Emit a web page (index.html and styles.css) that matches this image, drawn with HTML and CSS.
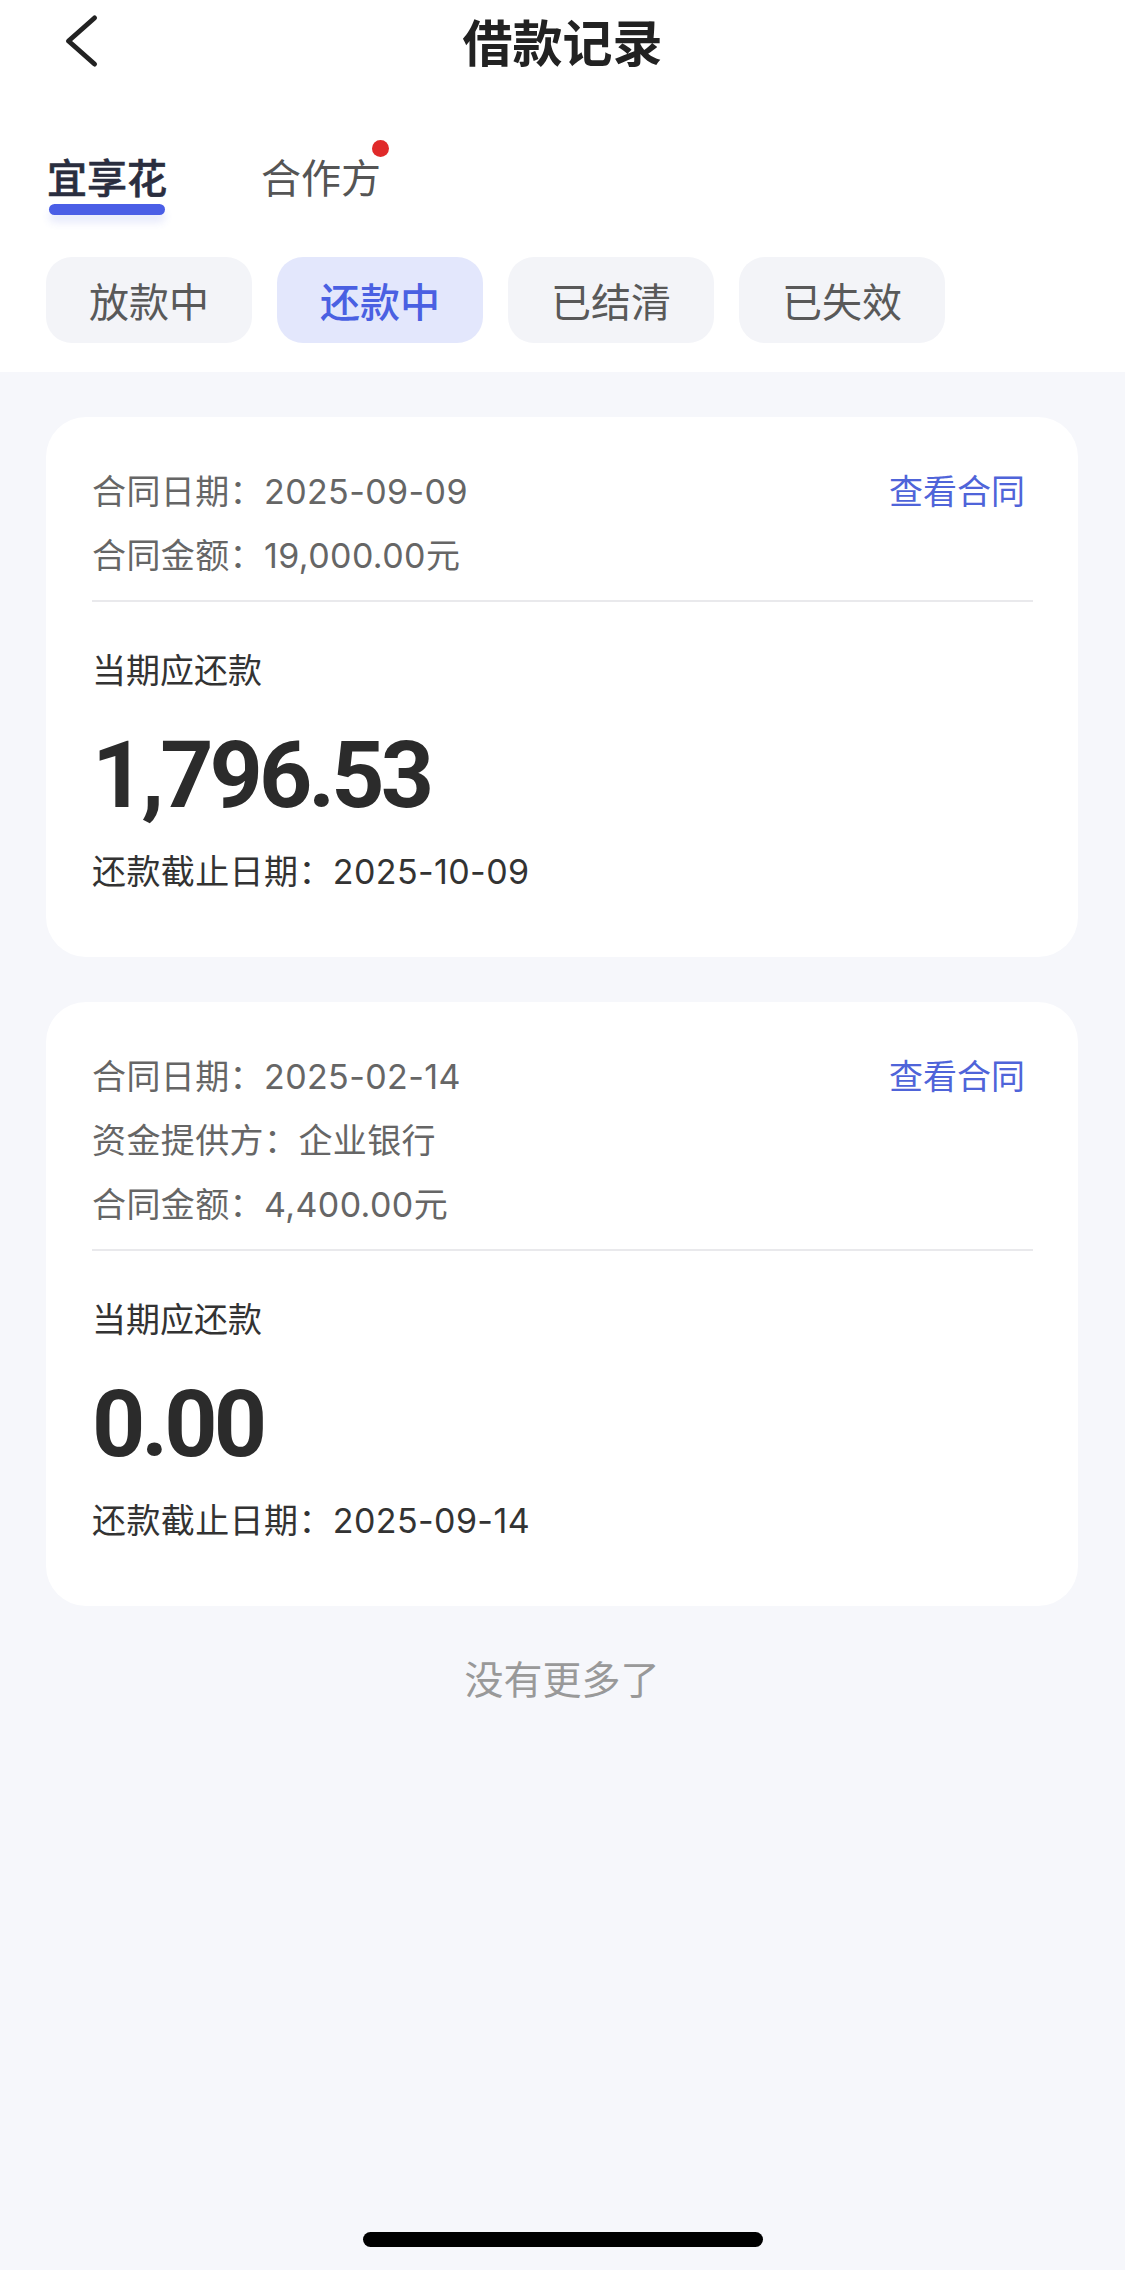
FILE: index.html
```html
<!DOCTYPE html>
<html lang="zh-CN">
<head>
<meta charset="utf-8">
<title>借款记录</title>
<link rel="stylesheet" href="styles.css">
</head>
<body>
<div class="page">
  <header class="header">
    <div class="nav">
      <div class="nav-left">
        <svg class="back" width="36" height="56" viewBox="0 0 36 56" aria-hidden="true">
          <path d="M30.5 4 L4.5 27 L30.5 50" fill="none" stroke="#222" stroke-width="5" stroke-linecap="round" stroke-linejoin="round"/>
        </svg>
      </div>
      <h1 class="title">借款记录</h1>
      <div class="nav-right"></div>
    </div>
    <div class="tabs">
      <div class="tab tab-active">
        <span class="tab-text">宜享花</span>
        <span class="tab-bar"></span>
      </div>
      <div class="tab">
        <span class="tab-text">合作方</span>
        <span class="dot"></span>
      </div>
    </div>
    <div class="chips">
      <div class="chip">放款中</div>
      <div class="chip chip-active">还款中</div>
      <div class="chip">已结清</div>
      <div class="chip">已失效</div>
    </div>
  </header>

  <main class="list">
    <section class="card">
      <div class="row">
        <span class="meta">合同日期：2025-09-09</span>
        <span class="link">查看合同</span>
      </div>
      <div class="row">
        <span class="meta">合同金额：19,000.00元</span>
      </div>
      <div class="divider"></div>
      <div class="due-label">当期应还款</div>
      <div class="amount">1,796.53</div>
      <div class="deadline">还款截止日期：2025-10-09</div>
    </section>

    <section class="card">
      <div class="row">
        <span class="meta">合同日期：2025-02-14</span>
        <span class="link">查看合同</span>
      </div>
      <div class="row">
        <span class="meta">资金提供方：企业银行</span>
      </div>
      <div class="row">
        <span class="meta">合同金额：4,400.00元</span>
      </div>
      <div class="divider"></div>
      <div class="due-label">当期应还款</div>
      <div class="amount">0.00</div>
      <div class="deadline">还款截止日期：2025-09-14</div>
    </section>

    <p class="end">没有更多了</p>
  </main>

  <div class="home-indicator"></div>
</div>
</body>
</html>
```

FILE: styles.css
```css
html, body {
  margin: 0;
  padding: 0;
}

body {
  background: #f6f7fb;
  font-family: Inter, "Noto Sans CJK SC", "Noto Sans", sans-serif;
  color: #333;
}

.page {
  min-height: 100vh;
  display: flex;
  flex-direction: column;
}

/* ---------- header ---------- */
.header {
  background: #ffffff;
  padding-bottom: 29px;
}

.nav {
  height: 84px;
  display: grid;
  grid-template-columns: 1fr auto 1fr;
  align-items: center;
}

.nav-left {
  padding-left: 64px;
  display: flex;
  align-items: center;
}

.back {
  display: block;
}

.title {
  margin: 0;
  padding-bottom: 5px;
  font-family: "Noto Sans CJK SC", sans-serif;
  font-size: 50px;
  line-height: 50px;
  font-weight: 700;
  color: #222;
}

.tabs {
  display: flex;
  gap: 94px;
  padding: 68px 0 0 47px;
  height: 63px;
}

.tab {
  position: relative;
  display: flex;
  flex-direction: column;
  align-items: center;
}

.tab-text {
  font-family: "Noto Sans CJK SC", sans-serif;
  font-size: 40px;
  line-height: 48px;
  color: #555;
}

.tab-active .tab-text {
  font-weight: 500;
  color: #2a2e3f;
  -webkit-text-stroke: 0.6px #2a2e3f;
}

.tab-bar {
  margin-top: 4px;
  width: 116px;
  height: 11px;
  border-radius: 6px;
  background: #4a5ee6;
  box-shadow: 0 7px 9px rgba(74, 94, 230, 0.14);
}

.dot {
  position: absolute;
  top: -12px;
  right: -8px;
  width: 17px;
  height: 17px;
  border-radius: 50%;
  background: #e02a2a;
}

.chips {
  display: flex;
  gap: 25px;
  padding: 42px 0 0 46px;
}

.chip {
  width: 206px;
  height: 86px;
  border-radius: 26px;
  background: #f3f4f8;
  display: flex;
  align-items: center;
  justify-content: center;
  font-family: "Noto Sans CJK SC", sans-serif;
  font-size: 40px;
  color: #595959;
}

.chip-active {
  background: #e3e7fc;
  color: #4a60e2;
  font-weight: 500;
}

/* ---------- list ---------- */
.list {
  padding: 45px 47px 0 46px;
  display: flex;
  flex-direction: column;
  gap: 45px;
}

.card {
  background: #ffffff;
  border-radius: 40px;
  padding: 43px 45px 60px 46px;
}

.row {
  height: 64px;
  display: flex;
  align-items: center;
  justify-content: space-between;
  font-size: 34px;
  line-height: 64px;
  letter-spacing: 0.4px;
}

.meta {
  color: #666;
}

.link {
  color: #4f64d9;
  margin-right: 8px;
  letter-spacing: 0;
}

.divider {
  margin-top: 12px;
  height: 2px;
  background: #e9e9ec;
}

.due-label {
  margin-top: 44px;
  font-size: 34px;
  line-height: 50px;
  color: #333;
}

.amount {
  margin-top: 25px;
  font-family: Roboto, "Liberation Sans", sans-serif;
  font-size: 93px;
  line-height: 110px;
  font-weight: 700;
  letter-spacing: -4px;
  color: #2b2b2b;
}

.deadline {
  margin-top: 16px;
  font-size: 34px;
  line-height: 50px;
  letter-spacing: 0.4px;
  color: #333;
}

.end {
  margin: -4px 0 0;
  text-align: center;
  font-family: "Noto Sans CJK SC", sans-serif;
  font-size: 39px;
  line-height: 60px;
  color: #999;
}

/* ---------- home indicator ---------- */
.home-indicator {
  margin: auto auto 23px;
  width: 400px;
  height: 15px;
  border-radius: 8px;
  background: #000;
}
```
